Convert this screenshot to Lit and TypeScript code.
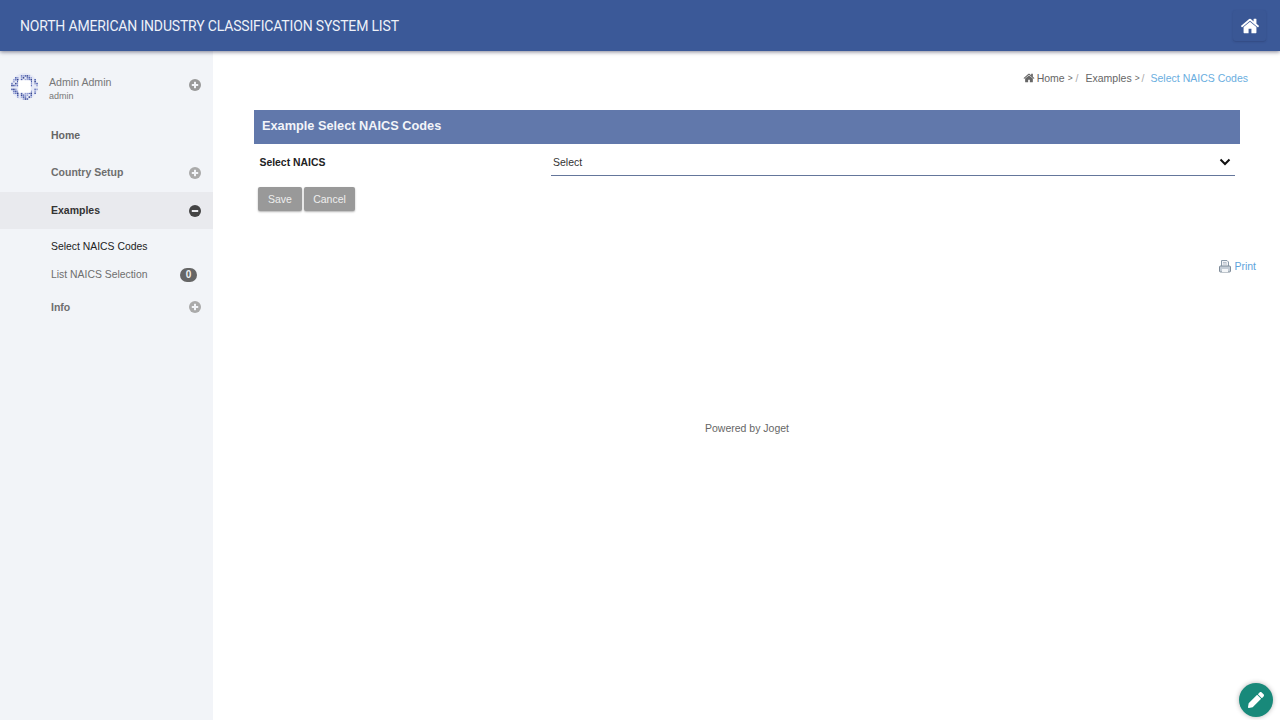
import { LitElement, html, css, svg } from "lit";
import { customElement } from "lit/decorators.js";

const plus = (fill: string) => html`<svg class="sign" viewBox="0 0 12 12"><circle cx="6" cy="6" r="6" fill=${fill}/><rect x="2.8" y="5" width="6.4" height="2" fill="#f2f4f8"/><rect x="5" y="2.8" width="2" height="6.4" fill="#f2f4f8"/></svg>`;
const minus = html`<svg class="sign" viewBox="0 0 12 12"><circle cx="6" cy="6" r="6" fill="#444"/><rect x="2.8" y="5" width="6.4" height="2" fill="#e9eaee"/></svg>`;
const homePath = "M1472 992v480q0 26-19 45t-45 19h-384v-384h-256v384h-384q-26 0-45-19t-19-45v-480q0-1 .5-3t.5-3l575-474 575 474q1 2 1 6zm223-69l-62 74q-8 9-21 11h-3q-13 0-21-7l-692-577-692 577q-12 8-24 7-13-2-21-11l-62-74q-8-10-7-23.500t11-21.500l719-599q32-26 76-26t76 26l244 204v-195q0-14 9-23t23-9h192q14 0 23 9t9 23v408l219 182q10 8 11 21.500t-7 23.500z";

const palette = ["#4a5cab", "#98a2d4", "#36468f", "#bcc3e6", "#6675bd"];
const dots: [number, number, string][] = [];
for (let y = 0; y < 28; y += 2) {
  for (let x = 0; x < 28; x += 2) {
    const dx = x + 1 - 14;
    const dy = y + 1 - 14;
    if (dx * dx + dy * dy > 182) continue;
    if (Math.abs(dx) < 7 && Math.abs(dy) < 7) continue;
    const h = (x * 7 + y * 13 + x * y) % 7;
    if (h === 0 || h === 3) continue;
    dots.push([x, y, palette[h % 5]]);
  }
}

@customElement("app-root")
export class AppRoot extends LitElement {
  static styles = css`
    :host { display: block; width: 1280px; height: 720px; overflow: hidden; position: relative; background: #fff; font-family: "Liberation Sans", Arial, sans-serif; color: #555; }
    .top { height: 51px; background: #3b5998; box-shadow: 0 1px 4px rgba(30,30,60,.55); position: relative; z-index: 2; display: flex; align-items: center; justify-content: space-between; padding: 0 14px 0 20px; }
    .title { font: 400 14px Roboto, sans-serif; color: #eef1f8; letter-spacing: -0.17px; }
    .homebtn { width: 33px; height: 31px; border-radius: 3px; background: #3a5795; box-shadow: 0 1px 2px rgba(30,40,80,.3); display: flex; align-items: center; justify-content: center; }
    .homebtn svg { width: 20px; height: 20px; }
    .body { display: flex; height: 669px; }
    .side { width: 213px; flex: none; background: #f2f4f8; }
    .user { height: 64px; padding: 8px 12px 0 11px; box-sizing: border-box; display: flex; align-items: flex-start; }
    .avatar { width: 27px; height: 27px; margin-top: 14px; margin-right: 11px; flex: none; }
    .uname { margin-top: 16px; font-size: 10.600px; color: #777; line-height: 14px; }
    .uid { font-size: 9px; color: #777; line-height: 13px; margin-top: 1px; }
    .user .sign { margin: 20px 0 0 auto; }
    .sign { width: 12px; height: 12px; flex: none; }
    .item { display: flex; align-items: center; justify-content: space-between; padding: 0 12px 0 51px; font-size: 10.500px; font-weight: 700; color: #6e6e6e; }
    .item .t { margin-bottom: 2px; }
    .item.home { height: 38px; padding-top: 2px; box-sizing: border-box; color: #666; }
    .item.cs { height: 38px; margin-top: 1px; }
    .item.ex { height: 37px; background: #e9eaee; color: #333; }
    .sub { display: flex; align-items: center; justify-content: space-between; padding: 0 16px 0 51px; font-size: 10.400px; height: 27px; color: #6e6e6e; }
    .sub.first { margin-top: 4px; color: #222; }
    .sub.second { margin-top: 1px; }
    .badge { width: 17px; height: 14px; border-radius: 7px; background: #666; color: #f2f2f2; font-size: 10px; font-weight: 700; display: flex; align-items: center; justify-content: center; }
    .item.info { height: 38px; }
    .main { flex: 1; display: flex; flex-direction: column; padding: 0 24px 0 41px; min-width: 0; }
    .crumbs { height: 59px; padding: 20px 8px 0 0; box-sizing: border-box; display: flex; justify-content: flex-end; align-items: flex-start; font-size: 10.500px; color: #666; line-height: 14px; }
    .crumbs svg { width: 12px; height: 12px; margin: 1px 2px 0 0; }
    .crumbs .gt { font-size: 8.500px; margin-left: 3px; }
    .crumbs .sep { color: #aaa; margin: 0 7px 0 3px; }
    .crumbs .sep.last { margin: 0 6px 0 2px; }
    .crumbs .cur { color: #6aaee0; }
    .panel { width: 986px; height: 34px; box-sizing: border-box; background: #6178ab; color: #f2f4f9; font-size: 12.750px; font-weight: 700; padding: 0 0 3px 8px; display: flex; align-items: center; }
    .row { width: 986px; height: 32px; display: flex; align-items: center; }
    .row label { width: 291px; padding: 4px 0 0 5.500px; box-sizing: border-box; flex: none; font-size: 10.400px; font-weight: 700; color: #222; }
    .select { width: 684px; margin-left: 6px; height: 32px; border-bottom: 1px solid #64769b; box-sizing: border-box; display: flex; align-items: center; justify-content: space-between; padding: 4px 4px 0 2px; font-size: 10.500px; color: #333; }
    .select svg { width: 12px; height: 8px; }
    .actions { display: flex; gap: 2px; margin: 11px 0 0 4px; }
    button { height: 24px; border: 0; border-radius: 2px; background: #999; color: #eee; font: 400 10.500px "Liberation Sans", sans-serif; padding: 0; box-shadow: 0 1px 2px rgba(0,0,0,.3); }
    .save { width: 44px; }
    .cancel { width: 51px; }
    .print { display: flex; justify-content: flex-end; align-items: center; gap: 3px; margin: 48px 0 0 0; width: 1002px; font-size: 10.500px; color: #5ea4dc; height: 14px; }
    .print svg { width: 12px; height: 13px; }
    .powered { width: 986px; text-align: center; margin-top: 148px; font-size: 10.500px; color: #666; line-height: 14px; }
    .fab { position: absolute; right: 7px; bottom: 3px; width: 34px; height: 34px; border-radius: 50%; background: #18897a; box-shadow: 0 0 5px rgba(0,0,0,.3); display: flex; align-items: center; justify-content: center; }
    .fab svg { width: 16px; height: 16px; }
  `;

  render() {
    return html`
      <div class="top">
        <div class="title">NORTH AMERICAN INDUSTRY CLASSIFICATION SYSTEM LIST</div>
        <div class="homebtn"><svg viewBox="0 0 1792 1792"><path fill="#fff" d=${homePath}/></svg></div>
      </div>
      <div class="body">
        <aside class="side">
          <div class="user">
            <svg class="avatar" viewBox="0 0 28 28">
              <circle cx="14" cy="14" r="14" fill="#e6e9f6"/>
              ${dots.map(([x, y, c]) => svg`<rect x=${x + 0.2} y=${y + 0.2} width="1.600" height="1.600" fill=${c}/>`)}
              <rect x="7.500" y="7.500" width="13" height="13" rx="1" fill="#fff"/>
            </svg>
            <div>
              <div class="uname">Admin Admin</div>
              <div class="uid">admin</div>
            </div>
            ${plus("#999")}
          </div>
          <div class="item home"><span>Home</span></div>
          <div class="item cs"><span class="t">Country Setup</span> ${plus("#aaa")}</div>
          <div class="item ex"><span class="t">Examples</span> ${minus}</div>
          <div class="sub first">Select NAICS Codes</div>
          <div class="sub second">List NAICS Selection <span class="badge">0</span></div>
          <div class="item info"><span>Info</span> ${plus("#aaa")}</div>
        </aside>
        <main class="main">
          <div class="crumbs">
            <svg viewBox="0 0 1792 1792"><path fill="#666" d=${homePath}/></svg>
            <span>Home</span><span class="gt">&gt;</span><span class="sep">/</span>
            <span>Examples</span><span class="gt">&gt;</span><span class="sep last">/</span>
            <span class="cur">Select NAICS Codes</span>
          </div>
          <div class="panel">Example Select NAICS Codes</div>
          <div class="row">
            <label>Select NAICS</label>
            <div class="select">Select
              <svg viewBox="0 0 12 8"><path d="M1.500 1.500 6 6l4.500-4.500" fill="none" stroke="#111" stroke-width="2"/></svg>
            </div>
          </div>
          <div class="actions">
            <button class="save">Save</button>
            <button class="cancel">Cancel</button>
          </div>
          <div class="print">
            <svg viewBox="0 0 12 13"><path d="M2.500 6V.5h5.500l1.500 1.500v4" fill="#f2f4f7" stroke="#8a9aaa"/><path d="M4 2.500h3.500M4 4h4" stroke="#a9b4c0" stroke-width=".8"/><rect x=".5" y="6" width="11" height="6" rx="1" fill="#c3ccd6" stroke="#7f8c99"/><rect x="3" y="9" width="6" height="3" fill="#f4f6f8"/></svg>
            Print
          </div>
          <div class="powered">Powered by Joget</div>
        </main>
      </div>
      <div class="fab"><svg viewBox="0 0 512 512"><path fill="#fff" d="M497.900 142.100l-46.100 46.100c-4.700 4.700-12.300 4.700-17 0l-111-111c-4.700-4.700-4.700-12.300 0-17l46.100-46.100c18.700-18.700 49.100-18.700 67.900 0l60.100 60.100c18.800 18.700 18.800 49.100 0 67.900zM284.200 99.800L21.600 362.400.4 483.900c-2.900 16.400 11.400 30.600 27.800 27.800l121.500-21.300 262.600-262.600c4.700-4.700 4.700-12.300 0-17l-111-111c-4.800-4.700-12.400-4.700-17.100 0z"/></svg></div>
    `;
  }
}
